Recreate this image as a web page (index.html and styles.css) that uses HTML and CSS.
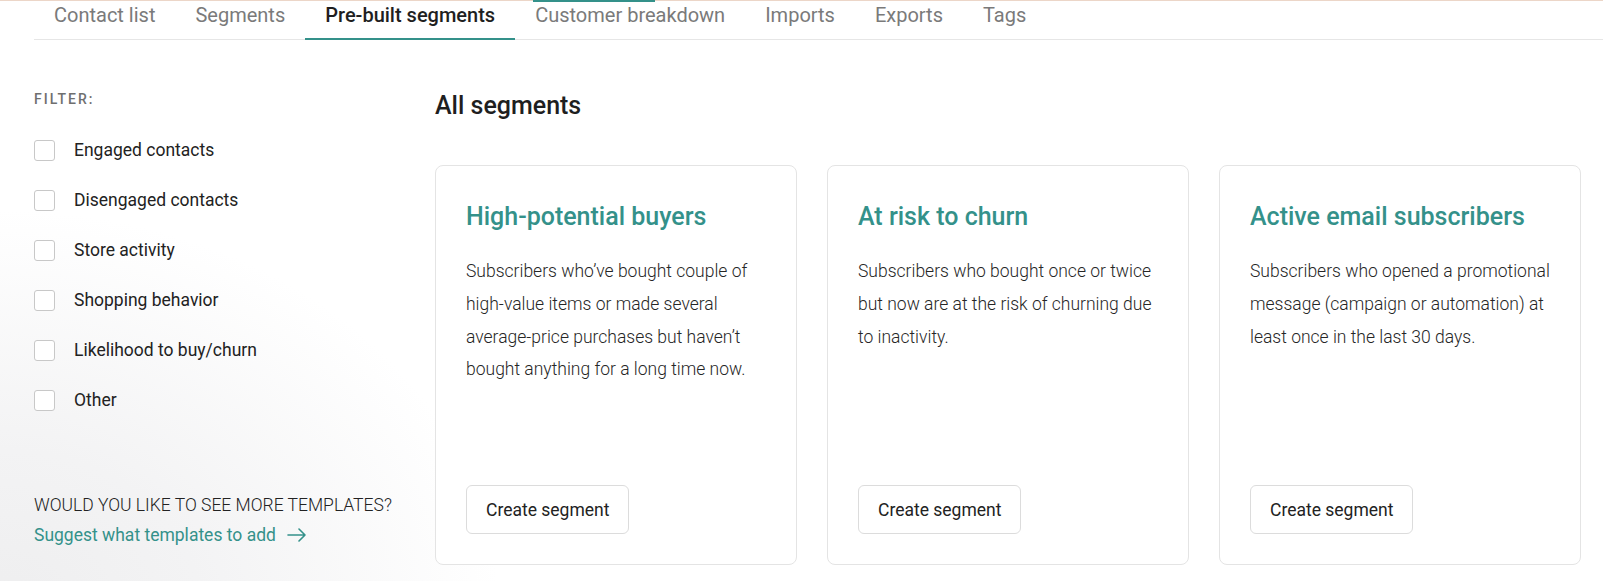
FILE: index.html
```html
<!DOCTYPE html>
<html lang="en">
<head>
<meta charset="utf-8">
<title>Pre-built segments</title>
<link rel="stylesheet" href="styles.css">
</head>
<body>
<div class="topline"><span class="topline-active"></span></div>
<nav class="tabs">
  <a class="tab">Contact list</a>
  <a class="tab">Segments</a>
  <a class="tab active">Pre-built segments</a>
  <a class="tab">Customer breakdown</a>
  <a class="tab">Imports</a>
  <a class="tab">Exports</a>
  <a class="tab">Tags</a>
</nav>
<div class="content">
  <aside class="sidebar">
    <div class="filter-label">FILTER:</div>
    <ul class="filters">
      <li class="filter"><span class="checkbox"></span>Engaged contacts</li>
      <li class="filter"><span class="checkbox"></span>Disengaged contacts</li>
      <li class="filter"><span class="checkbox"></span>Store activity</li>
      <li class="filter"><span class="checkbox"></span>Shopping behavior</li>
      <li class="filter"><span class="checkbox"></span>Likelihood to buy/churn</li>
      <li class="filter"><span class="checkbox"></span>Other</li>
    </ul>
    <div class="more">
      <div class="more-q">WOULD YOU LIKE TO SEE MORE TEMPLATES?</div>
      <a class="more-link">Suggest what templates to add
        <svg class="arrow" width="20" height="14" viewBox="0 0 20 14" fill="none" stroke="currentColor" stroke-width="1.6" stroke-linecap="round" stroke-linejoin="round"><path d="M1 7h17M12 1l6 6-6 6"/></svg>
      </a>
    </div>
  </aside>
  <main class="main">
    <h1 class="heading">All segments</h1>
    <div class="cards">
      <div class="card">
        <h2 class="card-title">High-potential buyers</h2>
        <p class="card-text">Subscribers who’ve bought couple of high-value items or made several average-price purchases but haven’t bought anything for a long time now.</p>
        <button class="btn">Create segment</button>
      </div>
      <div class="card">
        <h2 class="card-title">At risk to churn</h2>
        <p class="card-text">Subscribers who bought once or twice but now are at the risk of churning due to inactivity.</p>
        <button class="btn">Create segment</button>
      </div>
      <div class="card">
        <h2 class="card-title">Active email subscribers</h2>
        <p class="card-text">Subscribers who opened a promotional message (campaign or automation) at least once in the last 30 days.</p>
        <button class="btn">Create segment</button>
      </div>
    </div>
  </main>
</div>
</body>
</html>
```
FILE: styles.css
```css
* { box-sizing: border-box; }
html, body { margin: 0; padding: 0; }
body {
  width: 1603px;
  height: 581px;
  overflow: hidden;
  font-family: Roboto, "Liberation Sans", Arial, sans-serif;
  color: #222;
  background:
    radial-gradient(ellipse 500px 400px at 0px 610px, #eeeeef 0%, #f3f3f4 40%, rgba(255,255,255,0) 100%),
    #fff;
}
.topline {
  height: 2px;
  border-top: 1px solid #ecd6c8;
  position: relative;
}
.topline-active {
  position: absolute;
  left: 533px;
  top: -1px;
  width: 122px;
  height: 2px;
  background: #34918a;
}
.tabs {
  display: flex;
  margin-left: 34px;
  border-bottom: 1px solid #e6e6e6;
}
.tab {
  display: block;
  padding: 1px 20px 11px;
  font-size: 20px;
  line-height: 24px;
  color: #7a7a7a;
  border-bottom: 2px solid transparent;
  margin-bottom: -1px;
  white-space: nowrap;
}
.tab.active {
  color: #1f1f1f;
  font-weight: 500;
  border-bottom-color: #34918a;
}
.content {
  display: flex;
  padding: 0 22px 0 34px;
}
.sidebar {
  width: 401px;
  flex: none;
  padding-top: 50px;
}
.filter-label {
  font-size: 14px;
  line-height: 18px;
  font-weight: 500;
  letter-spacing: 2px;
  color: #6f6f6f;
  margin-bottom: 17px;
}
.filters {
  list-style: none;
  margin: 0;
  padding: 0;
}
.filter {
  display: flex;
  align-items: center;
  height: 50px;
  font-size: 17.5px;
  color: #222;
}
.checkbox {
  width: 21px;
  height: 21px;
  border: 1px solid #c8c8c8;
  border-radius: 3px;
  background: #fff;
  margin-right: 19px;
  flex: none;
}
.more {
  margin-top: 69px;
}
.more-q {
  font-size: 17.5px;
  line-height: 22px;
  font-weight: 300;
  color: #222;
}
.more-link {
  display: flex;
  align-items: center;
  gap: 11px;
  margin-top: 8px;
  font-size: 17.5px;
  line-height: 22px;
  color: #34918a;
}
.arrow { display: block; }
.main {
  flex: 1;
  padding-top: 51px;
}
.heading {
  margin: 0 0 44px;
  font-size: 25px;
  line-height: 30px;
  font-weight: 500;
  color: #1f1f1f;
}
.cards {
  display: grid;
  grid-template-columns: repeat(3, 1fr);
  gap: 30px;
}
.card {
  height: 400px;
  border: 1px solid #e4e4e4;
  border-radius: 8px;
  background: #fff;
  padding: 30px 30px 30px;
  display: flex;
  flex-direction: column;
  align-items: flex-start;
}
.card-title {
  margin: 0;
  font-size: 25px;
  line-height: 42px;
  font-weight: 500;
  color: #34918a;
}
.card-text {
  margin: 17px 0 0;
  font-size: 17.5px;
  line-height: 32.8px;
  font-weight: 300;
  color: #262626;
}
.btn {
  margin-top: auto;
  height: 49px;
  padding: 0 19px;
  font-family: inherit;
  font-size: 17.5px;
  color: #222;
  background: #fff;
  border: 1px solid #dcdcdc;
  border-radius: 6px;
}
```
